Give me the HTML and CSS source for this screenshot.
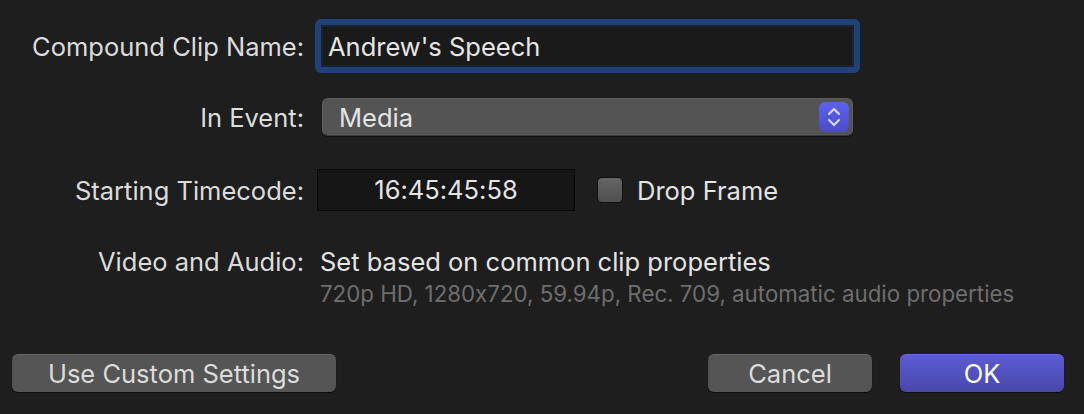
FILE: index.html
```html
<!DOCTYPE html>
<html lang="en">
<head>
    <meta charset="UTF-8">
    <title>New Compound Clip</title>
    <link rel="stylesheet" href="styles.css">
</head>
<body>
    <div class="dialog">
        <!-- nombre del clip -->
        <div class="row row-name">
            <label class="label" for="clipName">Compound Clip Name:</label>
            <div class="focus-ring">
                <input class="text-field" type="text" id="clipName" value="Andrew's Speech">
            </div>
        </div>

        <!-- evento -->
        <div class="row row-event">
            <span class="label">In Event:</span>
            <div class="popup">
                <span class="popup-value">Media</span>
                <span class="stepper">
                    <svg width="16" height="22" viewBox="0 0 16 22">
                        <path d="M3 8 L8 3 L13 8" fill="none" stroke="#d6d6ff" stroke-width="2.2" stroke-linecap="round" stroke-linejoin="round"/>
                        <path d="M3 14 L8 19 L13 14" fill="none" stroke="#d6d6ff" stroke-width="2.2" stroke-linecap="round" stroke-linejoin="round"/>
                    </svg>
                </span>
            </div>
        </div>

        <!-- timecode -->
        <div class="row row-timecode">
            <span class="label">Starting Timecode:</span>
            <div class="timecode">16:45:45:58</div>
            <label class="check">
                <span class="check-box"></span>
                <span>Drop Frame</span>
            </label>
        </div>

        <!-- video y audio -->
        <div class="row row-video">
            <span class="label">Video and Audio:</span>
            <div class="video-info">
                <div class="video-main">Set based on common clip properties</div>
                <div class="video-sub">720p HD, 1280x720, 59.94p, Rec. 709, automatic audio properties</div>
            </div>
        </div>

        <div class="buttons">
            <button class="btn btn-custom">Use Custom Settings</button>
            <div class="buttons-right">
                <button class="btn btn-cancel">Cancel</button>
                <button class="btn btn-ok">OK</button>
            </div>
        </div>
    </div>
</body>
</html>
```

FILE: styles.css
```css
body {
    margin: 0;
    padding: 0;
    background-color: #1e1e1e;
    font-family: Inter, "Noto Sans", sans-serif;
    font-feature-settings: "calt" 0;
    color: #dcdcdc;
}

.dialog {
    width: 1084px;
    height: 414px;
    box-sizing: border-box;
    padding-top: 19px;
}

.row {
    display: flex;
    align-items: center;
}

.label {
    width: 304px;
    text-align: right;
    font-size: 25.5px;
    color: #dcdcdc;
    flex-shrink: 0;
}

/* nombre */
.row-name {
    height: 54px;
}

.focus-ring {
    margin-left: 11px;
    width: 545px;
    height: 54px;
    box-sizing: border-box;
    background-color: #1f4379;
    border-radius: 6px;
    padding: 6px;
}

.text-field {
    width: 100%;
    height: 100%;
    box-sizing: border-box;
    background-color: #1a1a1a;
    border: 2px solid #1c2230;
    color: #e6e6e6;
    font-family: inherit;
    font-feature-settings: "calt" 0;
    font-size: 25.5px;
    padding: 0 5px;
    outline: none;
}

/* evento */
.row-event {
    margin-top: 25px;
    height: 38px;
}

.popup {
    margin-left: 18px;
    width: 531px;
    height: 38px;
    box-sizing: border-box;
    background-color: #545454;
    border: 1px solid #5e5e5e;
    border-bottom-color: #3a3a3a;
    border-radius: 6px;
    box-shadow: 0 1px 1px rgba(0, 0, 0, 0.6);
    display: flex;
    align-items: center;
    justify-content: space-between;
    padding: 0 3px 0 16px;
}

.popup-value {
    font-size: 25.5px;
    color: #e4e4e4;
}

.stepper {
    width: 30px;
    height: 30px;
    border-radius: 6px;
    background: linear-gradient(#5d62ee, #4a4cc6);
    display: flex;
    align-items: center;
    justify-content: center;
}

/* timecode */
.row-timecode {
    margin-top: 33px;
    height: 42px;
}

.timecode {
    margin-left: 13px;
    width: 258px;
    height: 42px;
    box-sizing: border-box;
    background-color: #161616;
    border: 1px solid #0a0a0a;
    text-align: center;
    line-height: 40px;
    font-size: 25.5px;
    color: #e4e4e4;
}

.check {
    display: flex;
    align-items: center;
    margin-left: 22px;
    font-size: 25.5px;
    color: #e4e4e4;
}

.check-box {
    width: 26px;
    height: 26px;
    box-sizing: border-box;
    border: 1px solid #111;
    border-radius: 5px;
    background: linear-gradient(#656565, #505050);
    margin-right: 14px;
}

/* video y audio */
.row-video {
    margin-top: 36px;
    align-items: flex-start;
}

.row-video .label {
    line-height: 30px;
}

.video-info {
    margin-left: 16px;
}

.video-main {
    font-size: 25.5px;
    line-height: 30px;
    color: #e4e4e4;
}

.video-sub {
    font-size: 22.3px;
    line-height: 26px;
    margin-top: 4px;
    color: #6e6e6e;
}

/* botones */
.buttons {
    display: flex;
    justify-content: space-between;
    padding: 0 20px 0 12px;
    margin-top: 47px;
}

.buttons-right {
    display: flex;
    gap: 28px;
}

.btn {
    height: 38px;
    box-sizing: border-box;
    border: none;
    border-radius: 6px;
    background-color: #555555;
    border-top: 1px solid #666;
    box-shadow: 0 1px 1px rgba(0, 0, 0, 0.6);
    color: #dcdcdc;
    font-family: inherit;
    font-feature-settings: "calt" 0;
    font-size: 25.5px;
    padding: 0;
}

.btn-custom {
    width: 324px;
}

.btn-cancel {
    width: 164px;
}

.btn-ok {
    width: 164px;
    background: linear-gradient(#5c5bd4, #4848a8);
    border-top-color: #6b6be0;
    color: #ffffff;
}
```
